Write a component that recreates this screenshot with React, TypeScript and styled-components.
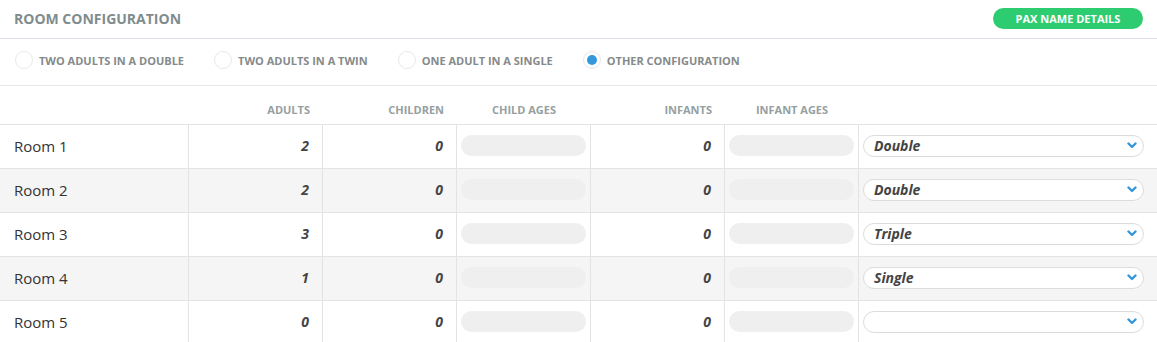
import React from 'react';
import styled, { createGlobalStyle } from 'styled-components';

const GlobalStyle = createGlobalStyle`
    body {
        margin: 0;
        background: #fff;
        font-family: "Open Sans", "Liberation Sans", sans-serif;
    }
`;

const options = [
    { label: 'Two adults in a double', checked: false },
    { label: 'Two adults in a twin', checked: false },
    { label: 'One adult in a single', checked: false },
    { label: 'Other configuration', checked: true },
];

const rooms = [
    { name: 'Room 1', adults: 2, children: 0, infants: 0, type: 'Double' },
    { name: 'Room 2', adults: 2, children: 0, infants: 0, type: 'Double' },
    { name: 'Room 3', adults: 3, children: 0, infants: 0, type: 'Triple' },
    { name: 'Room 4', adults: 1, children: 0, infants: 0, type: 'Single' },
    { name: 'Room 5', adults: 0, children: 0, infants: 0, type: '' },
];

function Chevron() {
    return (
        <svg width="10" height="7" viewBox="0 0 10 7">
            <path d="M1.5 1.5 L5 5 L8.5 1.5" fill="none" stroke="#3498db" strokeWidth="2.4" strokeLinecap="round" strokeLinejoin="round" />
        </svg>
    );
}

export default function App() {
    return (
        <Panel>
            <GlobalStyle />
            <Header>
                <Title>Room configuration</Title>
                <PaxButton>Pax name details</PaxButton>
            </Header>
            <Options>
                {options.map((o) => (
                    <Option key={o.label}>
                        <Radio $checked={o.checked} />
                        {o.label}
                    </Option>
                ))}
            </Options>
            <HeadRow>
                <span />
                <HeadCell>Adults</HeadCell>
                <HeadCell>Children</HeadCell>
                <HeadCell $center>Child ages</HeadCell>
                <HeadCell>Infants</HeadCell>
                <HeadCell $center>Infant ages</HeadCell>
                <span />
            </HeadRow>
            {rooms.map((r, i) => (
                <Row key={r.name} $alt={i % 2 === 1}>
                    <NameCell>{r.name}</NameCell>
                    <NumCell>{r.adults}</NumCell>
                    <NumCell>{r.children}</NumCell>
                    <PillCell><Pill /></PillCell>
                    <NumCell>{r.infants}</NumCell>
                    <PillCell><Pill /></PillCell>
                    <SelectCell>
                        <Select>
                            <span>{r.type}</span>
                            <Chevron />
                        </Select>
                    </SelectCell>
                </Row>
            ))}
        </Panel>
    );
}

const Panel = styled.div`
    width: 1157px;
`;

const Header = styled.div`
    display: flex;
    justify-content: space-between;
    align-items: center;
    height: 39px;
    padding: 0 14px 2px;
    box-sizing: border-box;
    border-bottom: 1px solid #e1deee;
`;

const Title = styled.h2`
    margin: 0;
    font-size: 14px;
    font-weight: 700;
    text-transform: uppercase;
    color: #7f8c8d;
`;

const PaxButton = styled.button`
    width: 150px;
    height: 21px;
    border: none;
    border-radius: 11px;
    background: #2ecc71;
    color: #fff;
    font-family: inherit;
    font-size: 11px;
    font-weight: 700;
    text-transform: uppercase;
    padding: 0;
`;

const Options = styled.div`
    display: flex;
    align-items: center;
    height: 46px;
    box-sizing: border-box;
    padding: 0 0 4px 15px;
    border-bottom: 1px solid #e6e6e6;
    height: 47px;
`;

const Option = styled.label`
    display: flex;
    align-items: center;
    gap: 6px;
    margin-right: 30px;
    font-size: 11px;
    font-weight: 700;
    text-transform: uppercase;
    color: #858a8b;
`;

const Radio = styled.span<{ $checked: boolean }>`
    width: 18px;
    height: 18px;
    box-sizing: border-box;
    border-radius: 50%;
    border: 1px solid #e8e8e8;
    background: #fff;
    position: relative;

    &::after {
        content: '';
        display: ${(p) => (p.$checked ? 'block' : 'none')};
        position: absolute;
        inset: 3px;
        border-radius: 50%;
        background: #3498db;
    }
`;

const cols = '189px 134px 134px 134px 134px 134px 1fr';

const HeadRow = styled.div`
    display: grid;
    grid-template-columns: ${cols};
    height: 38px;
    align-items: center;
    border-bottom: 1px solid #e3e3e3;
`;

const HeadCell = styled.div<{ $center?: boolean }>`
    font-size: 11px;
    font-weight: 700;
    text-transform: uppercase;
    color: #95a0a1;
    text-align: ${(p) => (p.$center ? 'center' : 'right')};
    padding: ${(p) => (p.$center ? '0' : '0 13px 0 0')};
    padding-top: 8px;
`;

const Row = styled.div<{ $alt: boolean }>`
    display: grid;
    grid-template-columns: ${cols};
    height: 44px;
    box-sizing: border-box;
    border-bottom: 1px solid #e3e3e3;
    background: ${(p) => (p.$alt ? '#f5f5f5' : '#fff')};

    & > div {
        display: flex;
        align-items: center;
        padding-bottom: 2px;
        border-right: 1px solid #e3e3e3;
    }

    & > div:last-child {
        border-right: none;
    }
`;

const NameCell = styled.div`
    padding-left: 14px;
    font-size: 15px;
    color: #333;
`;

const NumCell = styled.div`
    justify-content: flex-end;
    padding-right: 13px;
    font-size: 14px;
    font-weight: 700;
    font-style: italic;
    color: #444;
`;

const PillCell = styled.div`
    padding: 0 4px;
`;

const Pill = styled.span`
    display: block;
    width: 125px;
    height: 21px;
    border-radius: 11px;
    background: #efefef;
`;

const SelectCell = styled.div`
    padding: 0 13px 0 4px;
`;

const Select = styled.div`
    flex: 1;
    display: flex;
    align-items: center;
    justify-content: space-between;
    height: 22px;
    box-sizing: border-box;
    border: 1px solid #dcdcdc;
    border-radius: 11px;
    background: #fff;
    padding: 0 6px 0 10px;
    font-size: 14px;
    font-weight: 700;
    font-style: italic;
    color: #444;
`;
